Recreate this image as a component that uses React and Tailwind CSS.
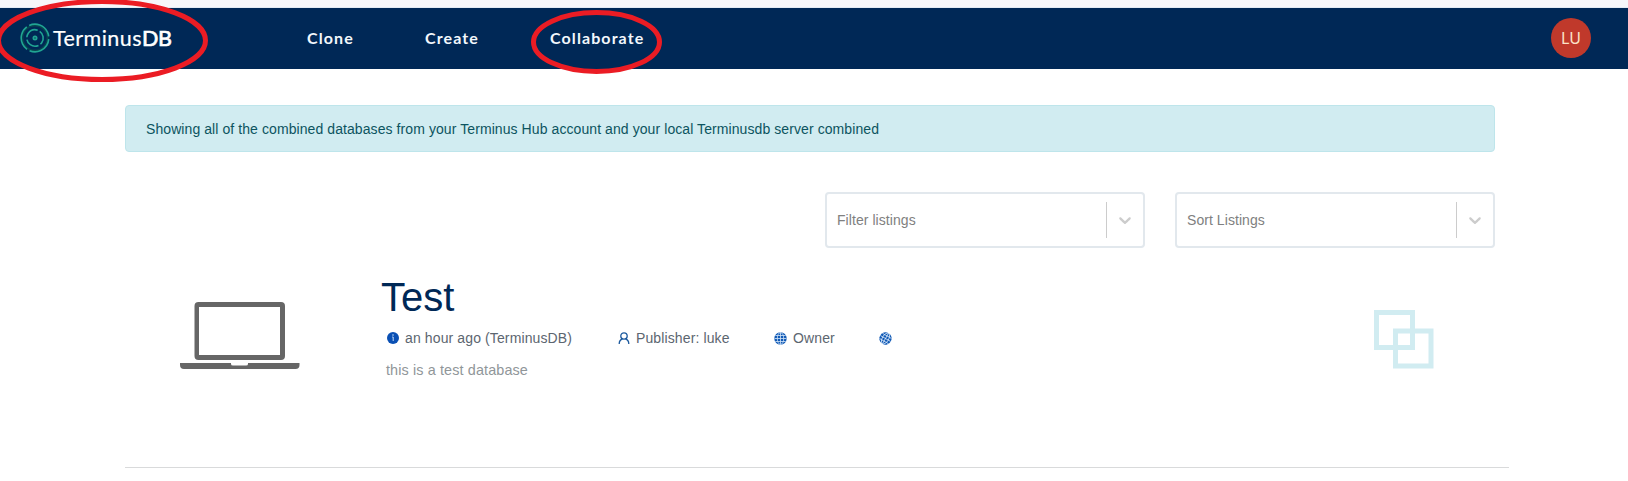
import React from "react";

function Logo() {
  return (
    <div className="flex items-center">
      <svg className="h-[30px] w-[30px]" viewBox="0 0 30 30" fill="none" stroke="#20a593" strokeWidth="1.6">
        <circle cx="15" cy="15" r="12.5" stroke="#06454f" strokeWidth="2" />
        <circle cx="15" cy="15" r="13.8" pathLength="90" strokeDasharray="27 3" transform="rotate(-115 15 15)" />
        <circle cx="15" cy="15" r="8.2" pathLength="90" strokeDasharray="26 4" transform="rotate(-55 15 15)" />
        <circle cx="15" cy="15" r="1.6" strokeWidth="1.8" />
      </svg>
      <span className="ml-[3px] font-['Lato',sans-serif] text-[21.5px] leading-[30px] tracking-[0.45px] text-white [-webkit-text-stroke:0.2px_white]">
        Terminus<span className="tracking-[-0.3px] [-webkit-text-stroke:0.7px_white]">DB</span>
      </span>
    </div>
  );
}

function Select({ label }) {
  return (
    <div className="flex h-14 w-[320px] items-center rounded-[4px] border-2 border-[#e2e8ed] bg-white">
      <span className="grow pl-[10px] text-[14px] tracking-[0.06px] text-[#808080]">{label}</span>
      <span className="h-9 w-px bg-[#cccccc]" />
      <span className="flex w-9 justify-center">
        <svg className="h-5 w-5" viewBox="0 0 20 20" fill="#cccccc">
          <path d="M4.516 7.548c0.436-0.446 1.043-0.481 1.576 0l3.908 3.747 3.908-3.747c0.533-0.481 1.141-0.446 1.574 0 0.436 0.445 0.408 1.197 0 1.615-0.406 0.418-4.695 4.502-4.695 4.502-0.217 0.223-0.502 0.335-0.787 0.335s-0.57-0.112-0.789-0.335c0 0-4.287-4.084-4.695-4.502s-0.436-1.17 0-1.615z" />
        </svg>
      </span>
    </div>
  );
}

function Laptop() {
  return (
    <svg className="h-[67px] w-[120px]" viewBox="0 0 120 67" fill="#666666">
      <path fillRule="evenodd" d="M18.500 0h82.500a4 4 0 0 1 4 4v50a4 4 0 0 1-4 4H18.500a4 4 0 0 1-4-4V4a4 4 0 0 1 4-4zM19 5v48h81V5z" />
      <path d="M0 61h51v1q0 1.5 2 1.5h13q2 0 2-1.5v-1h51.500v2q0 4-4 4H4q-4 0-4-4z" />
    </svg>
  );
}

function InfoIcon() {
  return (
    <svg className="h-3 w-3" viewBox="0 0 12 12">
      <circle cx="6" cy="6" r="6" fill="#0a50b4" />
      <path d="M5.200 5h1v4" stroke="#c5daf5" fill="none" />
      <circle cx="6" cy="3" r="0.800" fill="#c5daf5" />
    </svg>
  );
}

function UserIcon() {
  return (
    <svg className="h-3 w-3" viewBox="0 0 12 12" fill="none" stroke="#1d5a9e" strokeWidth="1.300">
      <circle cx="6" cy="4" r="3.200" />
      <path d="M1.200 12c0-3 1.500-4.500 3.300-5M10.800 12c0-3-1.500-4.500-3.300-5" />
    </svg>
  );
}

function GlobeIcon({ tilted }) {
  return (
    <svg className={tilted ? "h-[13px] w-[13px] rotate-[30deg]" : "h-[13px] w-[13px]"} viewBox="0 0 13 13" fill="none">
      <circle cx="6.500" cy="6.500" r="6.200" fill="#1059b5" />
      <path d="M6.500 0.500v12M0.500 6.500h12M1.300 3.500h10.400M1.300 9.500h10.400" stroke="#d3e4f7" strokeWidth="0.800" />
      <ellipse cx="6.500" cy="6.500" rx="3.200" ry="6" stroke="#d3e4f7" strokeWidth="0.800" />
    </svg>
  );
}

function Annotations() {
  return (
    <svg className="pointer-events-none absolute left-0 top-0 h-[90px] w-[680px]" viewBox="0 0 680 90" fill="none" stroke="#eb1c24" strokeWidth="5">
      <ellipse cx="102" cy="40.500" rx="103.500" ry="39" />
      <ellipse cx="596.500" cy="42" rx="63" ry="29.500" />
    </svg>
  );
}

export default function App() {
  return (
    <div className="relative h-[481px] w-[1628px] overflow-hidden bg-white font-['Liberation_Sans',Arial,sans-serif]">
      <div className="h-2 border-b border-[#e4ebf4] bg-[#f7f7fa]" />
      <header className="flex h-[61px] items-center bg-[#002856] pb-[2px] pl-[20px] pr-[37px]">
        <div className="w-[287px]"><Logo /></div>
        <nav className="flex grow font-['Lato',sans-serif] text-[16px] font-bold leading-6 tracking-[1.1px] text-[#f2f7fc]">
          <a className="w-[118px]">Clone</a>
          <a className="w-[125px]">Create</a>
          <a>Collaborate</a>
        </nav>
        <div className="flex h-10 w-10 items-center justify-center rounded-full bg-[#c0392b] font-['Noto_Sans',sans-serif] text-[16px] text-[#fbe3c8]">
          LU
        </div>
      </header>

      <main className="w-[1509px] pl-[125px] pt-9">
        <div className="mr-[14px] flex h-[47px] items-center rounded-[4px] border border-[#bee5eb] bg-[#d1ecf1] pl-[20px] pt-px text-[14px] tracking-[0.082px] text-[#0c5460]">
          Showing all of the combined databases from your Terminus Hub account and your local Terminusdb server combined
        </div>
        <div className="mr-[14px] mt-10 flex justify-end gap-[30px]">
          <Select label="Filter listings" />
          <Select label="Sort Listings" />
        </div>

        <section className="flex h-[220px] border-b border-[#d9dadb]">
          <div className="w-[256px] pl-[55px] pt-[54px]"><Laptop /></div>
          <div className="grow pt-[25px]">
            <h1 className="text-[40px] leading-[48px] text-[#002856]">Test</h1>
            <div className="mt-[7px] flex h-5 items-center pl-[6px] text-[14px] tracking-[0.12px] text-[#5c6670]">
              <div className="flex w-[231px] items-center gap-[6px]"><InfoIcon /><span>an hour ago (TerminusDB)</span></div>
              <div className="flex w-[156px] items-center gap-[6px]"><UserIcon /><span>Publisher: luke</span></div>
              <div className="flex w-[105px] items-center gap-[6px]"><GlobeIcon /><span>Owner</span></div>
              <GlobeIcon tilted />
            </div>
            <p className="mt-3 pl-[5px] text-[14.4px] leading-5 tracking-[0.12px] text-[#909699]">this is a test database</p>
          </div>
          <div className="w-[135px] pt-[62px]">
            <svg className="h-[59px] w-[60px]" viewBox="0 0 60 59" fill="none" stroke="#d1ecf1" strokeWidth="5">
              <path d="M2.500 2.500h36v35h-36zM21.500 21h35.500v35h-35.500z" />
            </svg>
          </div>
        </section>
      </main>
      <Annotations />
    </div>
  );
}
